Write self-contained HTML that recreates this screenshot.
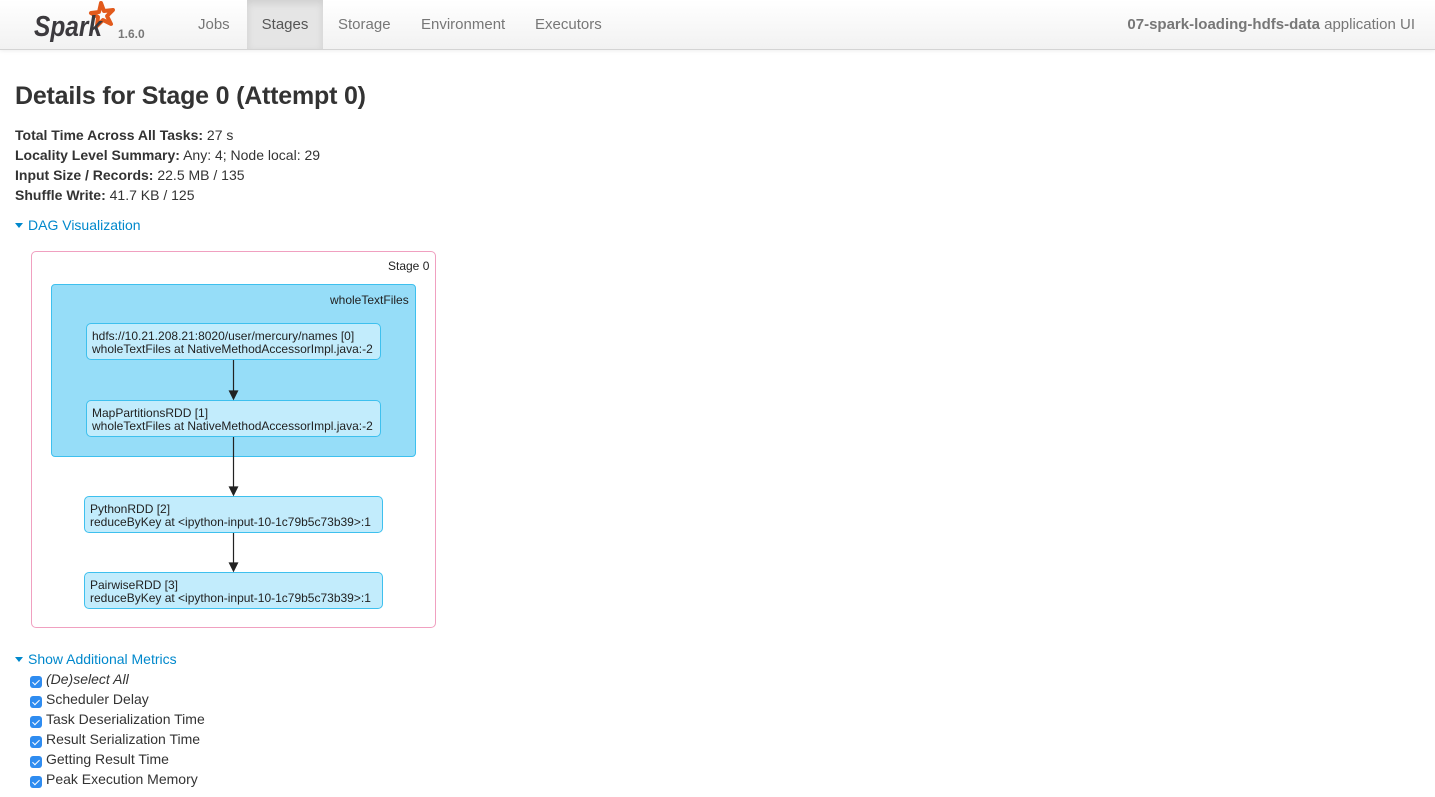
<!DOCTYPE html>
<html><head><meta charset="utf-8"><style>
body{margin:0;width:1435px;height:797px;background:#fff;font-family:"Liberation Sans",Arial,sans-serif;color:#333;position:relative;overflow:hidden}
.nav{position:absolute;left:0;top:0;width:1435px;height:49px;background:linear-gradient(#fff,#f2f2f2);border-bottom:1px solid #d4d4d4;box-shadow:0 1px 4px rgba(0,0,0,.07)}
.nav a{position:absolute;top:0;height:49px;line-height:50px;font-size:15px;color:#777;text-decoration:none}
.abs{position:absolute;white-space:nowrap}
.l{font-size:14px;line-height:20px}
.link{color:#0088cc;font-size:14px}
.tri{display:inline-block;width:0;height:0;border-left:4px solid transparent;border-right:4px solid transparent;border-top:5px solid #0088cc;margin-right:5px;vertical-align:2px}
.cb{position:absolute;left:30px;width:12px;height:12px;border-radius:3px;background:#2f8cf0}
.cb::after{content:"";position:absolute;left:4px;top:1.5px;width:3px;height:6px;border:solid #fff;border-width:0 1.6px 1.6px 0;transform:rotate(45deg)}
.node{position:absolute;background:#c2ecfc;border:1px solid #3ec0ee;border-radius:5px;font-size:12px;line-height:13px;padding:6px 0 0 5px;box-sizing:border-box;color:#222;white-space:nowrap}
</style></head><body>
<div class="nav">
<svg class="abs" style="left:30px;top:0" width="90" height="46" viewBox="0 0 90 46">
<path d="M71 3 L74 11 L83 10 L77 16 L81 24 L73 20 L67 26 L68 17 L61 13 L69 12 Z" fill="none" stroke="#e25a1c" stroke-width="4" stroke-linejoin="round"/>
<text x="4" y="36" font-family="Liberation Sans" font-weight="bold" font-style="italic" font-size="29" fill="#3c3a3e" textLength="68" lengthAdjust="spacingAndGlyphs">Spark</text>
</svg>
<span class="abs" style="left:118px;top:27px;font-size:12px;font-weight:bold;color:#777">1.6.0</span>
<a style="left:198px">Jobs</a>
<a style="left:247px;width:76px;text-align:center;background:#e5e5e5;color:#555;box-shadow:inset 0 3px 8px rgba(0,0,0,.1)">Stages</a>
<a style="left:338px">Storage</a>
<a style="left:421px">Environment</a>
<a style="left:535px">Executors</a>
<span class="abs" style="right:20px;top:16px;font-size:15px;color:#777"><b>07-spark-loading-hdfs-data</b> application UI</span>
</div>
<div class="abs" style="left:15px;top:82px;font-size:25px;font-weight:bold;color:#333;letter-spacing:-0.2px">Details for Stage 0 (Attempt 0)</div>
<div class="abs l" style="left:15px;top:125px"><b>Total Time Across All Tasks:</b> 27 s</div>
<div class="abs l" style="left:15px;top:145px"><b>Locality Level Summary:</b> Any: 4; Node local: 29</div>
<div class="abs l" style="left:15px;top:165px"><b>Input Size / Records:</b> 22.5 MB / 135</div>
<div class="abs l" style="left:15px;top:185px"><b>Shuffle Write:</b> 41.7 KB / 125</div>
<div class="abs link l" style="left:15px;top:215px"><span class="tri"></span>DAG Visualization</div>
<div class="abs" style="left:31px;top:251px;width:403px;height:375px;border:1px solid #f0a0c0;border-radius:5px"></div>
<div class="abs" style="left:388px;top:259px;font-size:12px;color:#222">Stage 0</div>
<div class="abs" style="left:51px;top:284px;width:363px;height:171px;background:#96ddf8;border:1px solid #3ec0ee;border-radius:4px"></div>
<div class="abs" style="left:330px;top:293px;font-size:12px;color:#222">wholeTextFiles</div>
<div class="node" style="left:86px;top:323px;width:295px;height:37px">hdfs://10.21.208.21:8020/user/mercury/names [0]<br>wholeTextFiles at NativeMethodAccessorImpl.java:-2</div>
<div class="node" style="left:86px;top:400px;width:295px;height:37px">MapPartitionsRDD [1]<br>wholeTextFiles at NativeMethodAccessorImpl.java:-2</div>
<div class="node" style="left:84px;top:496px;width:299px;height:37px">PythonRDD [2]<br>reduceByKey at &lt;ipython-input-10-1c79b5c73b39&gt;:1</div>
<div class="node" style="left:84px;top:572px;width:299px;height:37px">PairwiseRDD [3]<br>reduceByKey at &lt;ipython-input-10-1c79b5c73b39&gt;:1</div>
<svg class="abs" style="left:0;top:0" width="440" height="620">
<g stroke="#222" stroke-width="1.2" fill="#222">
<line x1="233.5" y1="360" x2="233.5" y2="392"/><path d="M229.5 391 L237.5 391 L233.5 399 Z"/>
<line x1="233.5" y1="437" x2="233.5" y2="488"/><path d="M229.5 487 L237.5 487 L233.5 495 Z"/>
<line x1="233.5" y1="533" x2="233.5" y2="564"/><path d="M229.5 563 L237.5 563 L233.5 571 Z"/>
</g></svg>
<div class="abs link l" style="left:15px;top:649px"><span class="tri"></span>Show Additional Metrics</div>
<div class="cb" style="top:676px"></div><div class="abs l" style="left:46px;top:669px;font-style:italic">(De)select All</div>
<div class="cb" style="top:696px"></div><div class="abs l" style="left:46px;top:689px">Scheduler Delay</div>
<div class="cb" style="top:716px"></div><div class="abs l" style="left:46px;top:709px">Task Deserialization Time</div>
<div class="cb" style="top:736px"></div><div class="abs l" style="left:46px;top:729px">Result Serialization Time</div>
<div class="cb" style="top:756px"></div><div class="abs l" style="left:46px;top:749px">Getting Result Time</div>
<div class="cb" style="top:776px"></div><div class="abs l" style="left:46px;top:769px">Peak Execution Memory</div>
</body></html>
